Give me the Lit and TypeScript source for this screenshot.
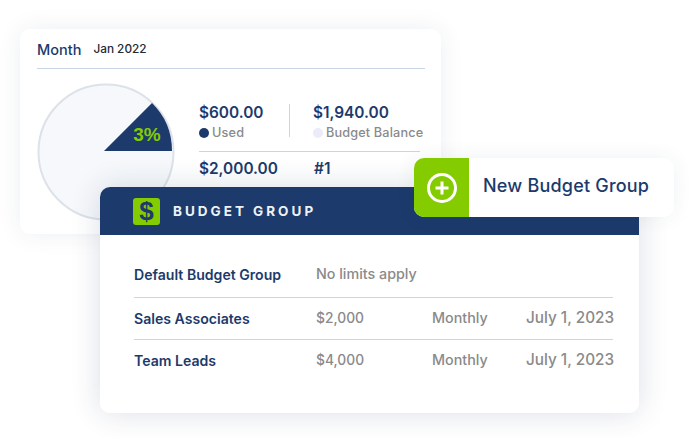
import { LitElement, css, html } from "lit";
import { customElement } from "lit/decorators.js";

const rows = [
  { name: "Sales Associates", amount: "$2,000", period: "Monthly", date: "July 1, 2023" },
  { name: "Team Leads", amount: "$4,000", period: "Monthly", date: "July 1, 2023" },
];

@customElement("app-root")
export class AppRoot extends LitElement {
  static styles = css`
    :host {
      display: block;
      position: relative;
      width: 689px;
      height: 438px;
      overflow: hidden;
      background: #fff;
      font-family: Inter, "Liberation Sans", sans-serif;
      color: #1c3a6b;
    }
    * { box-sizing: border-box; }

    .summary {
      position: absolute;
      left: 20px;
      top: 29px;
      width: 421px;
      height: 205px;
      padding: 0 16px 0 17px;
      background: #fff;
      border-radius: 10px;
      box-shadow: 0 0 24px rgba(30, 50, 90, .08);
    }
    .month {
      display: flex;
      align-items: center;
      gap: 12px;
      height: 40px;
      padding-top: 1px;
      border-bottom: 1px solid #c9d6e6;
      font-size: 14.5px;
      font-weight: 500;
    }
    .month span {
      font-size: 11.8px;
      color: #222a35;
    }
    .summary-body {
      display: flex;
      gap: 24px;
      padding-top: 14px;
    }
    .pie { flex: none; display: block; }
    .stats { padding-top: 21px; width: 227px; }
    .stat-top {
      display: grid;
      grid-template-columns: 90px 1fr;
      height: 48px;
      border-bottom: 1px solid #c9d6e6;
      width: 221px;
    }
    .stat + .stat {
      border-left: 1px solid #c9d6e6;
      padding-left: 23px;
      height: 33px;
    }
    .amount {
      font-size: 15.4px;
      font-weight: 600;
      line-height: 18px;
      white-space: nowrap;
    }
    .legend {
      display: flex;
      align-items: center;
      gap: 3px;
      margin-top: 3px;
      font-size: 12.7px;
      font-weight: 500;
      line-height: 15px;
      letter-spacing: .15px;
      color: #8a8a8a;
      white-space: nowrap;
    }
    .dot {
      width: 10px;
      height: 10px;
      border-radius: 50%;
      background: #1c3a6b;
    }
    .dot.light { background: #ecebfa; }
    .stat-bottom {
      display: grid;
      grid-template-columns: 115px 1fr;
      padding-top: 8px;
    }

    .groups {
      position: absolute;
      left: 100px;
      top: 187px;
      width: 539px;
      height: 226px;
      background: #fff;
      border-radius: 10px;
      overflow: hidden;
    }
    .groups-shadow {
      position: absolute;
      left: 100px;
      top: 187px;
      width: 539px;
      height: 226px;
      border-radius: 10px;
      box-shadow: 0 0 30px rgba(30, 50, 90, .16);
    }
    .groups-head {
      display: flex;
      align-items: center;
      gap: 13px;
      height: 48px;
      padding-left: 33px;
      background: #1c3a6b;
      color: #eef1f6;
      font-size: 13.5px;
      font-weight: 700;
      letter-spacing: 3px;
    }
    .dollar {
      display: flex;
      align-items: center;
      justify-content: center;
      width: 27px;
      height: 27px;
      border-radius: 3px;
      background: #84cc00;
      color: #1c3a6b;
      font-family: "Liberation Sans", sans-serif;
      font-size: 26px;
      font-weight: 700;
      letter-spacing: 0;
    }
    .table { padding: 18px 26px 0 34px; }
    .row {
      display: grid;
      grid-template-columns: 182px 116px 94px 1fr;
      align-items: center;
      height: 42px;
      border-top: 1px solid #c9d6e6;
      font-size: 14.3px;
      font-weight: 500;
      color: #8a8a8a;
      white-space: nowrap;
    }
    .row:first-child { border-top: 0; height: 44px; padding-bottom: 2px; }
    .row span { position: relative; top: -1px; }
    .row .date { font-size: 15.3px; }
    .row b {
      font-size: 14.1px;
      font-weight: 600;
      color: #1c3a6b;
    }
    .row .amt { font-size: 13.8px; }

    .new-group {
      position: absolute;
      left: 414px;
      top: 158px;
      display: flex;
      align-items: center;
      width: 260px;
      height: 59px;
      background: #fff;
      border-radius: 10px;
      overflow: hidden;
      box-shadow: 0 0 20px rgba(30, 50, 90, .07);
      font-size: 18px;
      font-weight: 500;
      letter-spacing: .2px;
    }
    .new-group .label { margin-bottom: 5px; }
    .plus {
      display: flex;
      align-items: center;
      justify-content: center;
      width: 55px;
      height: 100%;
      margin-right: 14px;
      background: #84cc00;
    }
  `;

  render() {
    return html`
      <section class="summary">
        <div class="month">Month <span>Jan 2022</span></div>
        <div class="summary-body">
          <svg class="pie" width="138" height="138" viewBox="0 0 138 138">
            <circle cx="69" cy="69" r="67.5" fill="#f6f8fb" stroke="#dde2e9" stroke-width="2"></circle>
            <path d="M67 68 L115 20 A67 67 0 0 1 135 68 Z" fill="#1c3a6b"></path>
            <text x="110" y="58" text-anchor="middle" font-family="Liberation Sans, sans-serif"
              font-size="19" font-weight="700" fill="#84cc00">3%</text>
          </svg>
          <div class="stats">
            <div class="stat-top">
              <div class="stat">
                <div class="amount">$600.00</div>
                <div class="legend"><i class="dot"></i>Used</div>
              </div>
              <div class="stat">
                <div class="amount">$1,940.00</div>
                <div class="legend"><i class="dot light"></i>Budget Balance</div>
              </div>
            </div>
            <div class="stat-bottom">
              <div class="amount">$2,000.00</div>
              <div class="amount">#1</div>
            </div>
          </div>
        </div>
      </section>

      <div class="groups-shadow"></div>
      <section class="groups">
        <header class="groups-head">
          <span class="dollar">$</span>
          BUDGET GROUP
        </header>
        <div class="table">
          <div class="row">
            <b>Default Budget Group</b>
            <span>No limits apply</span>
          </div>
          ${rows.map(
            (r) => html`
              <div class="row">
                <b>${r.name}</b>
                <span class="amt">${r.amount}</span>
                <span>${r.period}</span>
                <span class="date">${r.date}</span>
              </div>
            `
          )}
        </div>
      </section>

      <div class="new-group">
        <span class="plus">
          <svg width="32" height="32" viewBox="0 0 32 32">
            <circle cx="16" cy="16" r="13.5" fill="none" stroke="#fff" stroke-width="3"></circle>
            <path d="M16 9.5v13M9.5 16h13" stroke="#fff" stroke-width="3" fill="none"></path>
          </svg>
        </span>
        <span class="label">New Budget Group</span>
      </div>
    `;
  }
}
